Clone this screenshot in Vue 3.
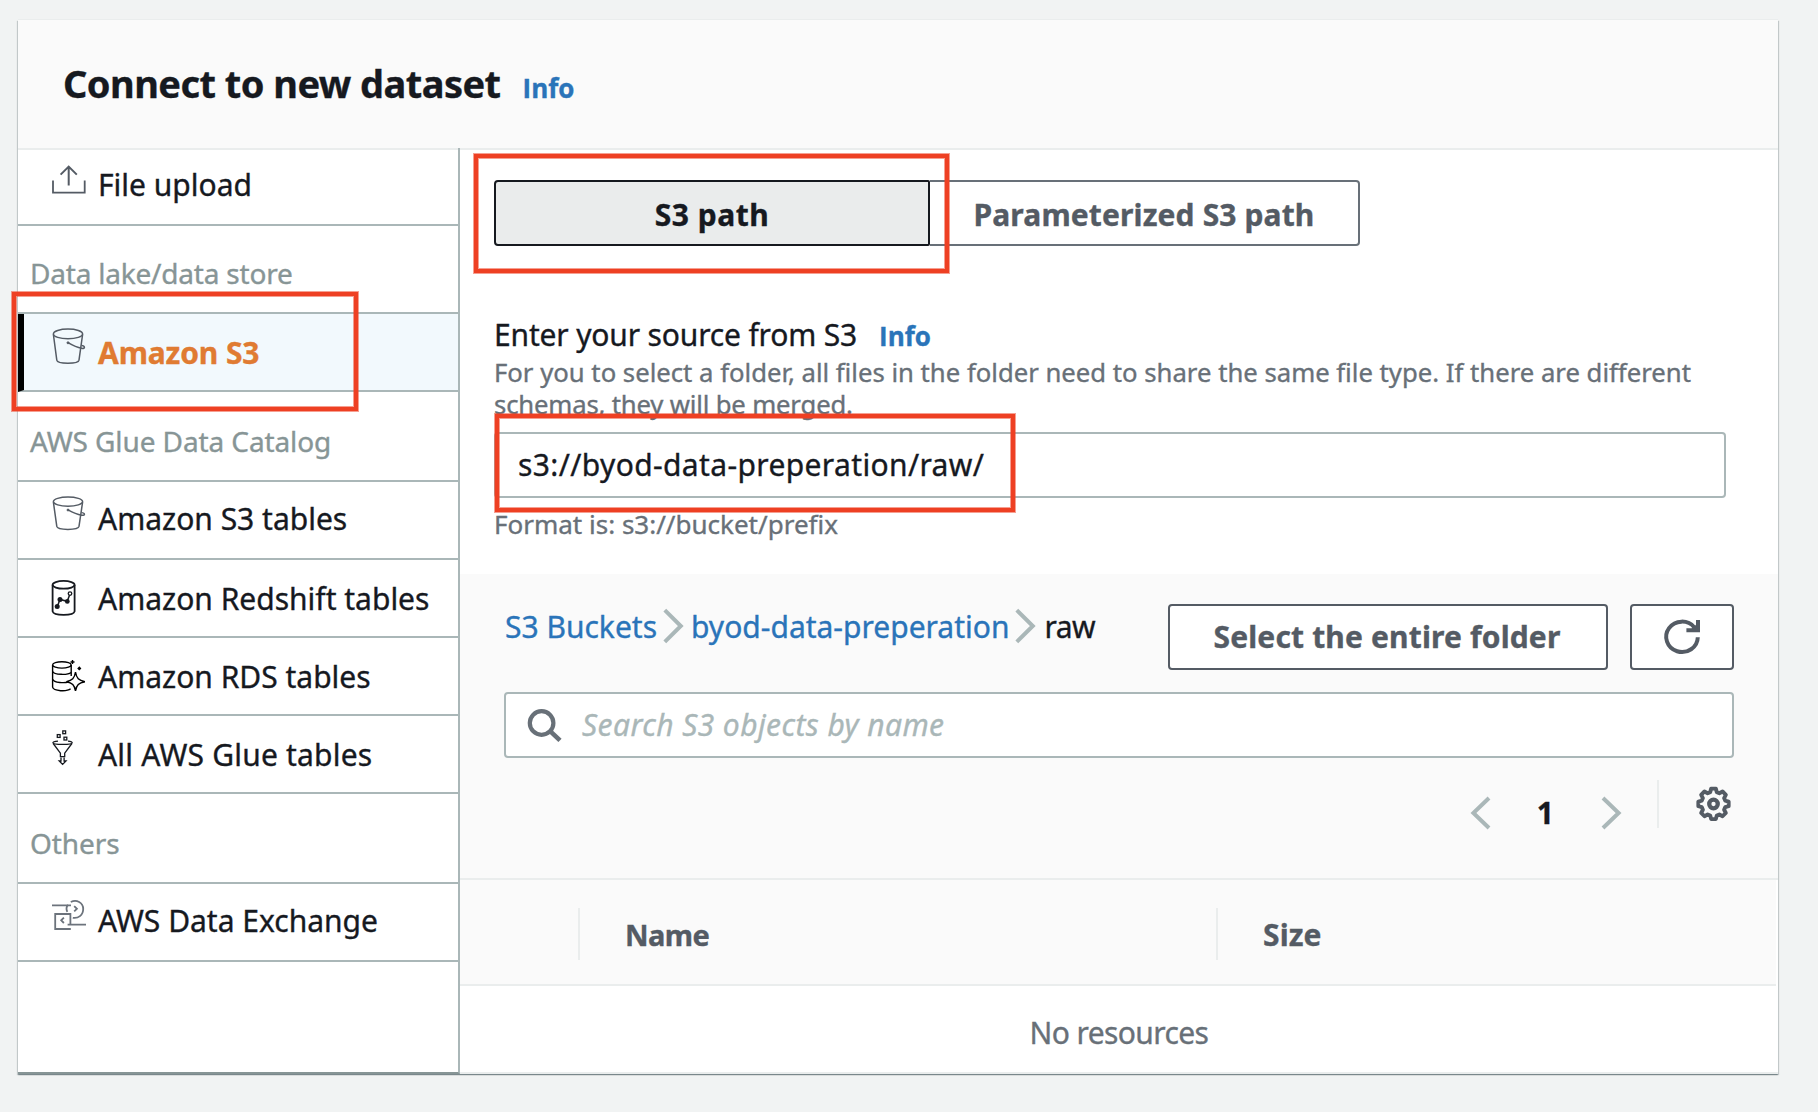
<script setup>
const groups = [
  { title: '', items: [{ label: 'File upload', icon: 'upload', cls: 'first' }] },
  {
    title: 'Data lake/data store',
    items: [{ label: 'Amazon S3', icon: 'bucket', cls: 'selected' }]
  },
  {
    title: 'AWS Glue Data Catalog',
    items: [
      { label: 'Amazon S3 tables', icon: 'bucketSmall', cls: 'raised' },
      { label: 'Amazon Redshift tables', icon: 'redshift', cls: '' },
      { label: 'Amazon RDS tables', icon: 'rds', cls: '' },
      { label: 'All AWS Glue tables', icon: 'glue', cls: 'loose' }
    ]
  },
  { title: 'Others', items: [{ label: 'AWS Data Exchange', icon: 'exchange', cls: 'raised' }] }
]
</script>

<template>
  <div class="page">
    <section class="card">
      <header class="card-header">
        <h1>Connect to new dataset</h1>
        <a class="info">Info</a>
      </header>

      <div class="body">
        <nav class="sidebar">
          <template v-for="group in groups" :key="group.title">
            <div v-if="group.title" class="group-title">{{ group.title }}</div>
            <div v-for="item in group.items" :key="item.label" class="item" :class="item.cls">
              <svg class="item-icon" width="80" height="76" viewBox="0 0 80 76" fill="none">
                <g v-if="item.icon === 'upload'" stroke="#545b64" stroke-width="2">
                  <path d="M35 30.5V42.6H66.7V30.5" stroke-width="1.8" />
                  <path d="M50.7 35.5V16.5M42.6 24.6l8.1-8 8.1 8" />
                </g>
                <g
                  v-else-if="item.icon === 'bucket' || item.icon === 'bucketSmall'"
                  stroke="#545b64"
                  stroke-width="1.5"
                  :transform="item.icon === 'bucketSmall' ? 'translate(0 .8) scale(1 .945)' : undefined"
                >
                  <ellipse cx="50" cy="19.9" rx="14.6" ry="4.9" />
                  <path d="M35.4 20.5L38.8 46.2C39.5 50.4 60.3 50.4 61 46.2L64.6 20.5" />
                  <path d="M50 28.6C55 31.5 60 33.6 63.6 34.3C67.6 35 67.2 31.8 63.4 31.6" />
                  <circle cx="50" cy="28.8" r="1" fill="#545b64" stroke-width="1" />
                </g>
                <g v-else-if="item.icon === 'redshift'" stroke="#16191f" stroke-width="1.8">
                  <ellipse cx="45.6" cy="24.8" rx="11" ry="3.9" />
                  <path d="M34.6 25V51.4C35.5 56 55.7 56 56.6 51.4V25" />
                  <path d="M39.3 46.4L42 39.4L49.2 41.3L51.6 35" stroke-width="1.5" />
                  <g fill="#16191f" stroke="none">
                    <circle cx="39.2" cy="46.6" r="2.5" />
                    <circle cx="42" cy="39.5" r="2.5" />
                    <circle cx="49.3" cy="41.4" r="2.4" />
                  </g>
                  <circle cx="52" cy="33.6" r="1.8" fill="#fff" stroke-width="1.3" />
                </g>
                <g v-else-if="item.icon === 'rds'" stroke="#000" stroke-width="1.4">
                  <ellipse cx="43.9" cy="26.9" rx="9.3" ry="3.2" />
                  <path d="M34.6 27V49.2C35.5 53.4 49 53.8 52.6 50.8M53.2 27V38" />
                  <path d="M34.6 33.5C36 37 50 37.2 53 34.4M34.6 41.2C36 45 47 45.2 50.4 43.8" />
                  <path d="M57.5 34C58.6 40.4 60.6 42.6 66.9 43.7C60.6 44.8 58.6 47 57.5 52.8C56.4 47 54.4 44.8 48.4 43.7C54.4 42.6 56.4 40.4 57.5 34Z" />
                  <path d="M54.5 22V26M52.5 24H56.5" />
                  <path d="M61.3 28.2L63.4 30.4L61.3 32.6L59.2 30.4Z" fill="#000" stroke="none" />
                </g>
                <g v-else-if="item.icon === 'glue'" stroke="#16191f" stroke-width="1.3">
                  <path d="M40 25.1C36.8 25.3 34.9 26 34.9 26.7C34.9 28.9 54.2 28.9 54.2 26.7C54.2 26 52.6 25.3 50 25.1" />
                  <path d="M35.2 27.5L42.4 37.2V40.6H46.7V37.2L53.9 27.5" />
                  <path d="M43 41.4V45H41.2L44.6 48.4L48 45H46.1V41.4" />
                  <rect x="44.8" y="14.9" width="2.8" height="2.8" />
                  <rect x="39.3" y="18.6" width="2.8" height="2.8" />
                  <rect x="46" y="21.2" width="2.8" height="2.8" />
                </g>
                <g v-else stroke="#6c737c" stroke-width="1.8">
                  <path d="M34 21.3H53M52.8 18C58.5 15.2 65.2 18.4 65.2 25C65.2 31.4 60 34.7 54.8 33.8" />
                  <path d="M50 20.8C48.2 22.8 48.2 25.4 49.3 27.8M56.2 22.2L58.9 24.8L56.2 27.4" />
                  <path d="M52.8 45H37.2V30H52.4V40.7M49.6 40.7H68M45.9 33.6L43.2 36.3L45.9 39" />
                </g>
              </svg>
              <span class="item-label">{{ item.label }}</span>
            </div>
          </template>
        </nav>

        <main class="content">
          <div class="source">
            <div class="segments">
              <button class="segment active">S3 path</button>
              <button class="segment">Parameterized S3 path</button>
            </div>
            <div class="field-label">
              <span class="field-name">Enter your source from S3</span>
              <a class="info">Info</a>
            </div>
            <p class="hint">
              For you to select a folder, all files in the folder need to share the same file type. If there are different<br /><span class="tight">schemas, they will be merged.</span>
            </p>
            <div class="input">s3://byod-data-preperation/raw/</div>
            <p class="constraint">Format is: s3://bucket/prefix</p>
          </div>

          <div class="browser">
            <div class="toolbar">
              <div class="crumbs">
                <a>S3 Buckets</a>
                <svg width="21" height="36" viewBox="0 0 21 36" fill="none"><path d="M1.8 2.2L17.8 18L1.8 33.8" stroke="#aab7b8" stroke-width="4" /></svg>
                <a>byod-data-preperation</a>
                <svg width="21" height="36" viewBox="0 0 21 36" fill="none"><path d="M1.8 2.2L17.8 18L1.8 33.8" stroke="#aab7b8" stroke-width="4" /></svg>
                <span>raw</span>
              </div>
              <div class="actions">
                <button class="btn select">Select the entire folder</button>
                <button class="btn refresh">
                  <svg width="40" height="38" viewBox="0 0 40 38" fill="none" stroke="#545b64" stroke-width="4">
                    <path d="M35.8 19.2A15.8 15.2 0 1 1 32.4 9.4" />
                    <path d="M36 2V12.2H24.4" />
                    <path d="M28 12.2L36 12.2V5Z" fill="#545b64" stroke="none" />
                  </svg>
                </button>
              </div>
            </div>
            <div class="search">
              <svg width="36" height="34" viewBox="0 0 36 34" fill="none" stroke="#687078">
                <circle cx="14.6" cy="14" r="11.8" stroke-width="4.2" />
                <path d="M22.6 21.6L33 31.4" stroke-width="4.6" />
              </svg>
              <span>Search S3 objects by name</span>
            </div>
            <div class="paging">
              <svg class="low" width="21" height="34" viewBox="0 0 21 34" fill="none"><path d="M19 2L3.4 17L19 32" stroke="#aab7b8" stroke-width="4" /></svg>
              <b class="low">1</b>
              <svg class="low" width="21" height="34" viewBox="0 0 21 34" fill="none"><path d="M2 2L17.6 17L2 32" stroke="#aab7b8" stroke-width="4" /></svg>
              <i class="rule"></i>
              <svg class="gear" width="35" height="36" viewBox="0 0 36 36" fill="none" stroke="#545b64">
                <path d="M15.6 2.2h4.8l1 3.6 2.6 1.1 3.3-1.8 3.4 3.5-1.8 3.3 1.1 2.6 3.6 1v4.8l-3.6 1-1.1 2.6 1.8 3.3-3.4 3.4-3.3-1.8-2.6 1.1-1 3.6h-4.8l-1-3.6-2.6-1.1-3.3 1.8-3.4-3.4 1.8-3.3-1.1-2.6-3.6-1v-4.8l3.6-1 1.1-2.6-1.8-3.3 3.4-3.5 3.3 1.8 2.6-1.1z" stroke-width="4" stroke-linejoin="round" />
                <circle cx="18" cy="18" r="4.4" stroke-width="4.4" />
              </svg>
            </div>
          </div>

          <div class="table-head">
            <div class="col check"></div>
            <div class="col name">Name</div>
            <div class="col size">Size</div>
          </div>
          <div class="empty">No resources</div>
        </main>
      </div>
    </section>

    <div class="mark mark-s3"></div>
    <div class="mark mark-path"></div>
    <div class="mark mark-input"></div>
  </div>
</template>

<style>
body {
  margin: 0;
  background: #f1f3f3;
}
</style>

<style scoped>
* {
  box-sizing: border-box;
}
.page {
  position: relative;
  width: 1818px;
  height: 1112px;
  padding: 20px 0 0 18px;
  overflow: hidden;
  font-family: "Noto Sans", "Open Sans", sans-serif;
  font-size: 30px;
  line-height: 40px;
  color: #16191f;
  background: #f1f3f3;
  -webkit-text-stroke-width: 0.35px;
}
.card {
  width: 1760px;
  height: 1054px;
  background: #fff;
  box-shadow: 0 -1px 0 #eaeded, 0 1px 1px rgba(0, 28, 36, 0.3), 1px 1px 1px rgba(0, 28, 36, 0.15), -1px 1px 1px rgba(0, 28, 36, 0.15);
}
.card-header {
  display: flex;
  align-items: baseline;
  height: 130px;
  padding: 43px 0 0 45px;
  background: #fafafa;
  border-bottom: 2px solid #eaeded;
}
h1 {
  margin: 0;
  font-size: 38px;
  line-height: 40px;
  font-weight: 700;
  letter-spacing: -0.55px;
}
.info {
  font-family: "Open Sans", sans-serif;
  font-size: 26px;
  font-weight: 700;
  color: #2a74b9;
}
.card-header .info {
  margin-left: 22px;
}
.body {
  display: flex;
  height: 924px;
}
.sidebar {
  width: 442px;
  height: 926px;
  margin-top: -2px;
  padding-top: 2px;
  flex: none;
  border-right: 2px solid #aab7b8;
  border-bottom: 2px solid #879596;
}
.item {
  display: flex;
  height: 78px;
  border-bottom: 2px solid #aab7b8;
}
.item-icon {
  flex: none;
}
.item-label {
  margin-top: 19px;
  white-space: nowrap;
}
.item.first {
  height: 76px;
}
.item.first .item-label {
  margin-top: 15px;
}
.item.raised .item-label {
  margin-top: 17px;
}
.item.loose {
  letter-spacing: 0.2px;
}
.item.selected {
  background: #f2f9fd;
  border-left: 6px solid #000;
  font-weight: 700;
  color: #e07b32;
  letter-spacing: -0.13px;
}
.item.selected .item-icon {
  margin-left: -6px;
}
.group-title {
  height: 90px;
  padding: 29px 0 0 12px;
  border-bottom: 2px solid #aab7b8;
  font-size: 28px;
  letter-spacing: -0.1px;
  color: #879596;
}
.first + .group-title {
  height: 88px;
  padding-top: 27px;
  letter-spacing: -0.2px;
}
.content {
  width: 1318px;
  border-bottom: 2px solid #eaeded;
}
.source {
  height: 424px;
  padding: 30px 52px 0 34px;
}
.segments {
  display: flex;
}
button {
  font: inherit;
  font-weight: 700;
  color: #545b64;
  margin: 0;
}
.segment {
  width: 430px;
  height: 66px;
  padding: 3px 0 0;
  background: #fff;
  border: 2px solid #687078;
  border-left: 0;
  border-radius: 0 4px 4px 0;
  letter-spacing: 0.13px;
}
.segment.active {
  width: 436px;
  color: #16191f;
  background: #eaecec;
  border: 2px solid #16191f;
  border-radius: 4px 2px 2px 4px;
  letter-spacing: 0.5px;
}
.field-label {
  display: flex;
  align-items: baseline;
  height: 40px;
  margin-top: 69px;
}
.field-name {
  letter-spacing: -0.16px;
}
.field-label .info {
  margin-left: 22px;
}
.hint,
.constraint {
  margin: 2px 0 0;
  line-height: 32px;
  font-size: 25.7px;
  color: #687078;
  white-space: nowrap;
}
.tight {
  letter-spacing: -0.17px;
}
.constraint {
  margin-top: 10px;
  font-size: 26px;
}
.input {
  height: 66px;
  margin-top: 11px;
  padding: 11px 22px;
  border: 2px solid #aab7b8;
  border-radius: 4px;
  letter-spacing: 0.37px;
}
.browser {
  height: 306px;
  padding: 30px 44px 0;
  background: #fafafa;
  border-bottom: 2px solid #eaeded;
}
.toolbar {
  display: flex;
  justify-content: space-between;
}
.crumbs {
  display: flex;
  align-items: center;
  height: 42px;
  margin: 2px 0 0 1px;
}
.crumbs svg {
  margin: -2px 7px 0 6px;
}
.crumbs a {
  color: #2a74b9;
}
.crumbs a + svg + span {
  margin-left: 1px;
}
.crumbs span {
  letter-spacing: -0.5px;
}
.actions {
  display: flex;
  gap: 22px;
}
.btn {
  height: 66px;
  padding: 0;
  background: #fff;
  border: 2px solid #545b64;
  border-radius: 4px;
}
.select {
  width: 440px;
  padding-right: 2px;
  letter-spacing: 0.15px;
}
.refresh {
  display: flex;
  align-items: center;
  justify-content: center;
  width: 104px;
}
.search {
  display: flex;
  align-items: center;
  height: 66px;
  margin-top: 22px;
  padding-left: 21px;
  background: #fff;
  border: 2px solid #aab7b8;
  border-radius: 4px;
  font-style: italic;
  color: #aab7b8;
}
.search svg {
  margin-top: 1px;
}
.search span {
  margin-left: 19px;
  letter-spacing: 0.41px;
}
.paging {
  display: flex;
  align-items: center;
  justify-content: flex-end;
  height: 48px;
  margin-top: 22px;
}
.low {
  margin-top: 18px;
}
.paging b {
  margin-left: 46px;
  margin-right: 47px;
}
.rule {
  width: 2px;
  height: 48px;
  margin: 0 37px 0 35px;
  background: #eaeded;
}
.gear {
  margin-right: 3px;
}
.table-head {
  display: flex;
  height: 106px;
  margin-right: 2px;
  padding-top: 28px;
  background: #fafafa;
  border-bottom: 2px solid #eaeded;
}
.col {
  height: 52px;
  line-height: 53px;
  font-weight: 700;
  color: #545b64;
  border-right: 2px solid #eaeded;
}
.check {
  width: 120px;
}
.name {
  width: 638px;
  padding-left: 45px;
  font-size: 29px;
  letter-spacing: -0.6px;
}
.size {
  padding-left: 45px;
  border: 0;
  line-height: 54px;
  letter-spacing: 0.1px;
}
.empty {
  height: 86px;
  padding-top: 27px;
  text-align: center;
  color: #687078;
  letter-spacing: -0.6px;
}
/* Callout outlines drawn over the panel */
.mark {
  position: absolute;
  border: 4px solid #ee4023;
  box-shadow: 0 0 0 1px rgba(238, 64, 35, 0.5), inset 0 0 0 1px rgba(238, 64, 35, 0.5);
}
.mark-s3 {
  left: 12px;
  top: 292px;
  width: 346px;
  height: 119px;
}
.mark-path {
  left: 474px;
  top: 154px;
  width: 475px;
  height: 119px;
}
.mark-input {
  left: 495px;
  top: 414px;
  width: 520px;
  height: 98px;
}
</style>
